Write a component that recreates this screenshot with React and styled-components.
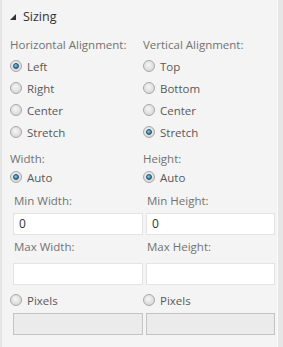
import styled, { createGlobalStyle } from 'styled-components';

const GlobalStyle = createGlobalStyle`
  html, body {
    margin: 0;
    padding: 0;
    background: #f4f4f4;
  }
`;

const Panel = styled.div`
  display: flex;
  width: 283px;
  height: 347px;
  background: #f4f4f4;
  border-left: 2px solid #e4e4e4;
  box-sizing: border-box;
  font-family: 'Open Sans', 'Noto Sans', sans-serif;
  font-size: 11.5px;
  overflow: hidden;
`;

const Content = styled.div`
  flex: 1;
  padding-left: 8px;
`;

const ScrollTrack = styled.div`
  width: 5px;
  margin-left: 2px;
  border-left: 1px solid #fbfbfb;
  background: #e6e6e6;
`;

const Header = styled.div`
  display: flex;
  align-items: flex-start;
  gap: 7px;
  height: 37px;
  box-sizing: border-box;
  padding-top: 9px;
  color: #333;
  font-size: 12.5px;
  line-height: 16px;
`;

const Arrow = styled.svg`
  width: 6px;
  height: 6px;
  margin-top: 5px;
`;

const Columns = styled.div`
  display: grid;
  grid-template-columns: 133px 132px;
`;

const Column = styled.div`
  display: flex;
  flex-direction: column;
`;

const Label = styled.div`
  color: #727272;
  line-height: 16px;
  margin-top: ${p => p.$top || 0}px;
  padding-left: ${p => (p.$indent ? 4 : 0)}px;
  white-space: nowrap;
`;

const RadioRow = styled.label`
  display: flex;
  align-items: center;
  gap: 5px;
  height: ${p => p.$h || 22}px;
  margin-top: ${p => p.$top || 0}px;
  color: #585858;
  white-space: nowrap;
`;

const RadioDot = styled.span`
  position: relative;
  width: 12px;
  height: 12px;
  border-radius: 50%;
  box-sizing: border-box;
  border: 1px solid #a8a8a8;
  background: radial-gradient(circle at 45% 40%, #f6f6f6 0%, #dedede 60%, #d0d0d0 100%);
  flex-shrink: 0;

  &::after {
    content: '';
    display: ${p => (p.$checked ? 'block' : 'none')};
    position: absolute;
    left: 2px;
    top: 2px;
    width: 6px;
    height: 6px;
    border-radius: 50%;
    box-sizing: border-box;
    border: 1px solid #1f4f6a;
    background: radial-gradient(circle at 40% 35%, #8fd0ee 0%, #3a8fbb 55%, #1d5e80 100%);
  }
`;

const Field = styled.div`
  width: ${p => p.$w}px;
  height: 22px;
  margin: ${p => p.$top || 0}px 0 0 3px;
  box-sizing: border-box;
  border: 1px solid ${p => (p.$disabled ? '#c4c4c4' : '#e4e4e4')};
  background: ${p => (p.$disabled ? '#ebebeb' : '#fff')};
  color: #333;
  font-size: 12px;
  line-height: 20px;
  padding-left: 5px;
`;

const Radio = ({ label, checked, top, h }) => (
  <RadioRow $top={top} $h={h}>
    <RadioDot $checked={checked} />
    {label}
  </RadioRow>
);

const SizingColumn = ({ align, options, selected, dim, fieldW }) => (
  <Column>
    <Label>{align} Alignment:</Label>
    {options.map((o, i) => (
      <Radio key={o} label={o} checked={o === selected} top={i === 0 ? 2 : 0} />
    ))}
    <Label $top={8}>{dim}:</Label>
    <Radio label="Auto" checked h={20} />
    <Label $top={6} $indent>Min {dim}:</Label>
    <Field $w={fieldW} $top={4}>0</Field>
    <Label $top={4} $indent>Max {dim}:</Label>
    <Field $w={fieldW} $top={8} />
    <Radio label="Pixels" top={4} />
    <Field $w={fieldW} $top={2} $disabled />
  </Column>
);

export default function App() {
  return (
    <>
      <GlobalStyle />
      <Panel>
        <Content>
          <Header>
            <Arrow viewBox="0 0 6 6">
              <polygon points="6,0 6,6 0,6" fill="#333" />
            </Arrow>
            Sizing
          </Header>
          <Columns>
            <SizingColumn
              align="Horizontal"
              options={['Left', 'Right', 'Center', 'Stretch']}
              selected="Left"
              dim="Width"
              fieldW={130}
            />
            <SizingColumn
              align="Vertical"
              options={['Top', 'Bottom', 'Center', 'Stretch']}
              selected="Stretch"
              dim="Height"
              fieldW={129}
            />
          </Columns>
        </Content>
        <ScrollTrack />
      </Panel>
    </>
  );
}
